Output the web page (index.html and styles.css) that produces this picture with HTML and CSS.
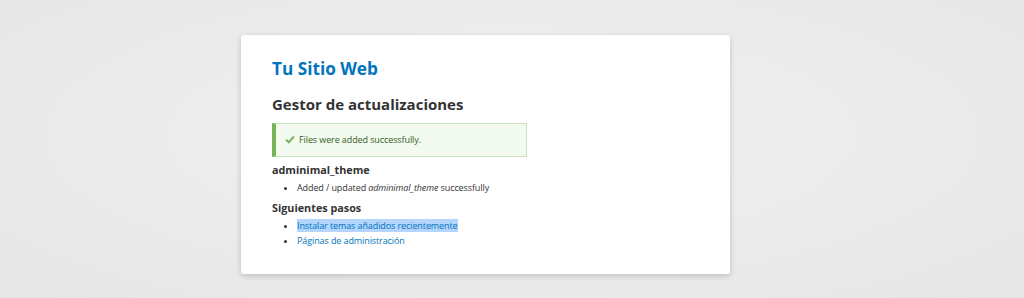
FILE: index.html
```html
<!DOCTYPE html>
<html lang="es">

<head>
    <meta charset="utf-8">
    <title>Gestor de actualizaciones</title>
    <link rel="stylesheet" href="styles.css">
</head>

<body>
    <div class="page">
        <div class="card">
            <div class="site-name">Tu Sitio Web</div>
            <h1 class="page-title">Gestor de actualizaciones</h1>

            <div class="messages status">
                <svg class="check" width="10" height="9" viewBox="0 0 10 9">
                    <path d="M1 4.6 L3.8 7.3 L9 1.4" fill="none" stroke="#77b259" stroke-width="2"/>
                </svg>
                Files were added successfully.
            </div>

            <h3 class="section-title">adminimal_theme</h3>
            <ul class="item-list">
                <li>Added / updated <em>adminimal_theme</em> successfully</li>
            </ul>

            <h3 class="section-title">Siguientes pasos</h3>
            <ul class="item-list">
                <li><a href="#" class="selected">Instalar temas añadidos recientemente</a></li>
                <li><a href="#">Páginas de administración</a></li>
            </ul>
        </div>
    </div>
</body>

</html>
```

FILE: styles.css
```css
html, body {
    margin: 0;
    height: 100%;
}

body {
    font-family: "Open Sans", "DejaVu Sans", sans-serif;
    color: #333;
    background: radial-gradient(ellipse at 50% 45%, #f1f1f1 0%, #ebebeb 55%, #e6e6e6 100%);
}

.page {
    padding-top: 35px;
}

/*The white box in the middle*/
.card {
    width: 489px;
    margin-left: 241px;
    box-sizing: border-box;
    background: #fff;
    border-radius: 3px;
    box-shadow: 0 2px 6px rgba(0, 0, 0, 0.18);
    padding: 22px 31px 23px;
}

.site-name {
    color: #0074bd;
    font-size: 17.2px;
    font-weight: bold;
    line-height: 24px;
}

.page-title {
    font-size: 15px;
    font-weight: bold;
    line-height: 20px;
    margin: 13px 0 9px;
}

.messages {
    width: 255px;
    box-sizing: border-box;
    font-size: 9px;
    letter-spacing: -0.1px;
    line-height: 13px;
    padding: 9px 10px 10px 9px;
    display: flex;
    align-items: center;
    gap: 4px;
}

.messages.status {
    color: #325e1c;
    background: #f3faef;
    border: 1px solid #c9e1bd;
    border-left: 4px solid #77b259;
}

.section-title {
    font-size: 10.8px;
    font-weight: bold;
    line-height: 16px;
    margin: 5px 0 2px;
}

.item-list {
    margin: 0 0 3px;
    padding-left: 25px;
    font-size: 9px;
    letter-spacing: -0.1px;
    line-height: 15px;
}

.item-list a {
    color: #0074bd;
    text-decoration: none;
}

.item-list a.selected {
    background: #b4d5fe;
}
```
